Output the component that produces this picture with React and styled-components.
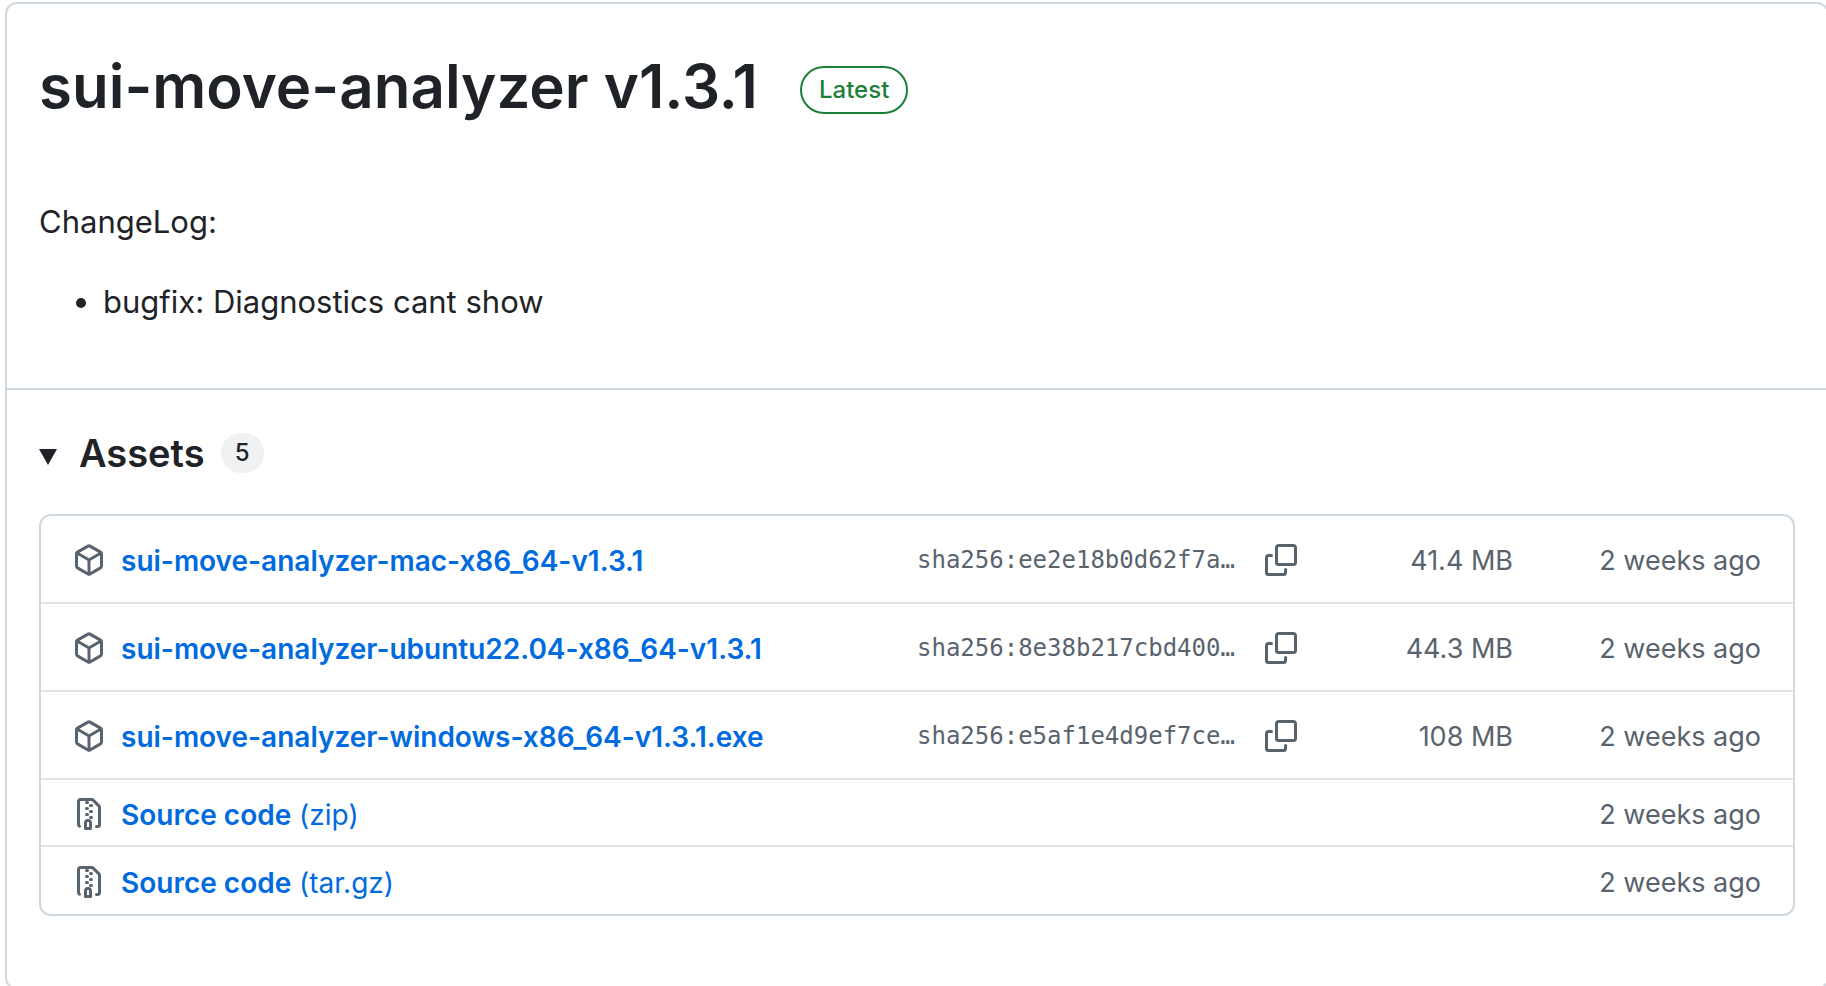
import React from "react";
import styled, { createGlobalStyle } from "styled-components";

const color = {
  text: "#1f2328",
  muted: "#59636e",
  link: "#006bdf",
  border: "#d1d9e0",
  borderMuted: "#dfe4e9",
  success: "#1a7f37",
  counter: "#eff1f3",
};

const GlobalStyle = createGlobalStyle`
  *, *::before, *::after { box-sizing: border-box; }
  body {
    margin: 0;
    background: #fff;
    color: ${color.text};
    font-family: Inter, "Liberation Sans", sans-serif;
    font-size: 28px;
    line-height: 42px;
  }
`;

const Page = styled.main`
  padding: 2px 0 0 5px;
  overflow-x: clip;
`;

const Card = styled.article`
  margin-right: -3px;
  border: 2px solid ${color.border};
  border-radius: 12px;
`;

const Summary = styled.section`
  padding: 34px 32px 62px;
`;

const TitleRow = styled.header`
  display: flex;
  flex-wrap: wrap;
  align-items: center;
  gap: 42px;
  margin-bottom: 64px;
`;

const Title = styled.h1`
  margin: 0;
  font-size: 60px;
  font-weight: 600;
  line-height: 96px;
`;

const LatestBadge = styled.span`
  margin-top: 8px;
  padding: 0 17px;
  border: 2px solid ${color.success};
  border-radius: 24px;
  color: ${color.success};
  font-size: 24px;
  font-weight: 500;
  line-height: 44px;
`;

const Notes = styled.div`
  font-size: 31px;
  line-height: 48px;

  p {
    margin: 0 0 32px;
  }
`;

const NoteList = styled.ul`
  margin: 0;
  padding: 0 0 0 64px;
`;

const AssetsPanel = styled.details`
  padding: 32px 32px 72px;
  border-top: 2px solid ${color.border};
`;

const AssetsHeader = styled.summary`
  display: flex;
  align-items: center;
  margin-bottom: 30px;
  list-style: none;
  cursor: pointer;

  &::-webkit-details-marker {
    display: none;
  }
`;

const Caret = styled.svg`
  width: 18px;
  height: 16px;
  margin: 8px 22px 0 0;
  fill: currentColor;
`;

const AssetsTitle = styled.h2`
  margin: 0 16px 0 0;
  font-size: 38px;
  font-weight: 600;
  line-height: 62px;
`;

const Counter = styled.span`
  min-width: 43px;
  border-radius: 20px;
  background: ${color.counter};
  font-size: 24px;
  font-weight: 500;
  line-height: 40px;
  text-align: center;
`;

const AssetList = styled.ul`
  margin: 0;
  padding: 0;
  border: 2px solid ${color.border};
  border-radius: 12px;
  list-style: none;
`;

const AssetRow = styled.li`
  display: flex;
  align-items: center;
  min-height: ${(p) => (p.$tall ? "88px" : "67px")};
  padding: 2px 32px 0;
  color: ${color.muted};

  &:not(:last-child) {
    border-bottom: 2px solid ${color.borderMuted};
  }
`;

const Icon = styled.svg`
  display: block;
  flex: none;
  width: 32px;
  height: 32px;
  fill: ${color.muted};
`;

const AssetLink = styled.a`
  flex: 1;
  min-width: 0;
  margin-left: 16px;
  padding-top: 2px;
  color: ${color.link};
  text-decoration: none;

  strong {
    font-weight: 600;
  }
`;

const Digest = styled.span`
  width: 318px;
  font-family: "DejaVu Sans Mono", monospace;
  font-size: 24px;
  white-space: nowrap;
`;

const CopyButton = styled.button`
  display: grid;
  place-items: center;
  width: 56px;
  height: 56px;
  margin-left: 18px;
  padding: 0;
  border: 0;
  border-radius: 12px;
  background: none;
  cursor: pointer;
`;

const Meta = styled.span`
  padding-top: 2px;
  font-size: 27px;
  text-align: right;
  white-space: nowrap;
`;

const Size = styled(Meta)`
  width: 204px;
`;

const Age = styled(Meta)`
  width: 248px;
`;

const PackageIcon = () => (
  <Icon viewBox="0 0 16 16" aria-hidden="true">
    <path d="m8.878.392 5.25 3.045c.54.314.872.89.872 1.514v6.098a1.75 1.75 0 0 1-.872 1.514l-5.25 3.045a1.75 1.75 0 0 1-1.756 0l-5.25-3.045A1.75 1.75 0 0 1 1 11.049V4.951c0-.624.332-1.201.872-1.514L7.122.392a1.75 1.75 0 0 1 1.756 0ZM7.875 1.69l-4.63 2.685L8 7.133l4.755-2.758-4.63-2.685a.248.248 0 0 0-.25 0ZM2.5 5.677v5.372c0 .09.047.171.125.216l4.625 2.683V8.432Zm6.25 8.271 4.625-2.683a.25.25 0 0 0 .125-.216V5.677L8.75 8.432Z" />
  </Icon>
);

const ZipIcon = () => (
  <Icon viewBox="0 0 16 16" aria-hidden="true">
    <path d="M3.5 1.75v11.5c0 .09.048.173.126.217a.75.75 0 0 1-.752 1.298A1.748 1.748 0 0 1 2 13.25V1.75C2 .784 2.784 0 3.75 0h5.586c.464 0 .909.185 1.237.513l2.914 2.914c.329.328.513.773.513 1.237v8.586A1.75 1.75 0 0 1 12.25 15h-.5a.75.75 0 0 1 0-1.5h.5a.25.25 0 0 0 .25-.25V4.664a.25.25 0 0 0-.073-.177L9.513 1.573a.25.25 0 0 0-.177-.073H7.25a.75.75 0 0 1 0 1.5h-.5a.75.75 0 0 1 0-1.5h-3a.25.25 0 0 0-.25.25Zm3.75 8.75h.5c.966 0 1.75.784 1.75 1.75v3a.75.75 0 0 1-.75.75h-2.5a.75.75 0 0 1-.75-.75v-3c0-.966.784-1.75 1.75-1.75ZM6 5.25a.75.75 0 0 1 .75-.75h.5a.75.75 0 0 1 0 1.5h-.5A.75.75 0 0 1 6 5.25Zm.75 2.25h.5a.75.75 0 0 1 0 1.5h-.5a.75.75 0 0 1 0-1.5ZM8 6.75A.75.75 0 0 1 8.75 6h.5a.75.75 0 0 1 0 1.5h-.5A.75.75 0 0 1 8 6.75ZM8.75 3h.5a.75.75 0 0 1 0 1.5h-.5a.75.75 0 0 1 0-1.5ZM8 9.75A.75.75 0 0 1 8.75 9h.5a.75.75 0 0 1 0 1.5h-.5A.75.75 0 0 1 8 9.75Zm-1 2.5v2.25h1v-2.25a.25.25 0 0 0-.25-.25h-.5a.25.25 0 0 0-.25.25Z" />
  </Icon>
);

const CopyIcon = () => (
  <Icon viewBox="0 0 16 16" aria-hidden="true">
    <path d="M0 6.75C0 5.784.784 5 1.75 5h1.5a.75.75 0 0 1 0 1.5h-1.5a.25.25 0 0 0-.25.25v7.5c0 .138.112.25.25.25h7.5a.25.25 0 0 0 .25-.25v-1.5a.75.75 0 0 1 1.5 0v1.5A1.75 1.75 0 0 1 9.25 16h-7.5A1.75 1.75 0 0 1 0 14.25Z" />
    <path d="M5 1.75C5 .784 5.784 0 6.75 0h7.5C15.216 0 16 .784 16 1.75v7.5A1.75 1.75 0 0 1 14.25 11h-7.5A1.75 1.75 0 0 1 5 9.25Zm1.75-.25a.25.25 0 0 0-.25.25v7.5c0 .138.112.25.25.25h7.5a.25.25 0 0 0 .25-.25v-7.5a.25.25 0 0 0-.25-.25Z" />
  </Icon>
);

const binaries = [
  { name: "sui-move-analyzer-mac-x86_64-v1.3.1", digest: "sha256:ee2e18b0d62f7a…", size: "41.4 MB" },
  { name: "sui-move-analyzer-ubuntu22.04-x86_64-v1.3.1", digest: "sha256:8e38b217cbd400…", size: "44.3 MB" },
  { name: "sui-move-analyzer-windows-x86_64-v1.3.1.exe", digest: "sha256:e5af1e4d9ef7ce…", size: "108 MB" },
];

const sources = ["(zip)", "(tar.gz)"];

export default function App() {
  return (
    <>
      <GlobalStyle />
      <Page>
        <Card>
          <Summary>
            <TitleRow>
              <Title>sui-move-analyzer v1.3.1</Title>
              <LatestBadge>Latest</LatestBadge>
            </TitleRow>
            <Notes>
              <p>ChangeLog:</p>
              <NoteList>
                <li>bugfix: Diagnostics cant show</li>
              </NoteList>
            </Notes>
          </Summary>
          <AssetsPanel open>
            <AssetsHeader>
              <Caret viewBox="0 0 18 16" aria-hidden="true">
                <path d="M0 0h18L9 16Z" />
              </Caret>
              <AssetsTitle>Assets</AssetsTitle>
              <Counter>5</Counter>
            </AssetsHeader>
            <AssetList>
              {binaries.map((asset) => (
                <AssetRow key={asset.name} $tall>
                  <PackageIcon />
                  <AssetLink href="#">
                    <strong>{asset.name}</strong>
                  </AssetLink>
                  <Digest>{asset.digest}</Digest>
                  <CopyButton type="button" aria-label={`Copy digest of ${asset.name}`}>
                    <CopyIcon />
                  </CopyButton>
                  <Size>{asset.size}</Size>
                  <Age as="time">2 weeks ago</Age>
                </AssetRow>
              ))}
              {sources.map((format) => (
                <AssetRow key={format}>
                  <ZipIcon />
                  <AssetLink href="#">
                    <strong>Source code</strong> {format}
                  </AssetLink>
                  <Age as="time">2 weeks ago</Age>
                </AssetRow>
              ))}
            </AssetList>
          </AssetsPanel>
        </Card>
      </Page>
    </>
  );
}
